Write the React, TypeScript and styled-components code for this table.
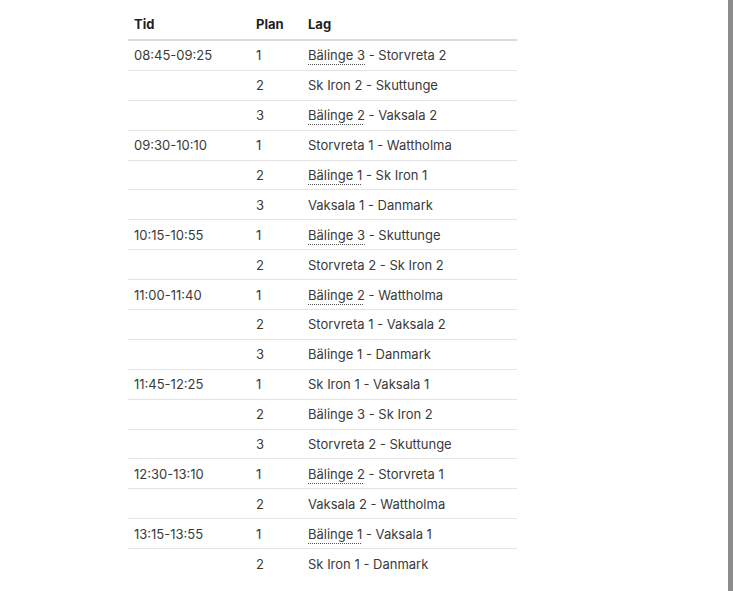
import styled, { createGlobalStyle } from 'styled-components';

const GlobalStyle = createGlobalStyle`
  html, body {
    margin: 0;
    padding: 0;
    background: #fff;
  }
  body {
    font-family: Inter, "Liberation Sans", Arial, sans-serif;
    color: #212529;
  }
`;

const Screen = styled.div`
  display: flex;
  height: 591px;
  overflow: hidden;
`;

const Content = styled.main`
  flex: 1;
  padding: 8px 0 0 128px;
`;

const EdgeBar = styled.div`
  width: 5px;
  background: #8c8c8c;
`;

const Table = styled.table`
  width: 389px;
  border-collapse: collapse;
  font-size: 13px;
  table-layout: fixed;
`;

const HeadCell = styled.th<{ $w: number }>`
  width: ${(p) => p.$w}px;
  box-sizing: border-box;
  text-align: left;
  font-weight: 700;
  color: #1f1f1f;
  padding: 8px 6px 7px;
  border-bottom: 2px solid #dcdcdc;
`;

const Row = styled.tr<{ $first: boolean }>`
  border-top: ${(p) => (p.$first ? 'none' : '1px solid #e4e4e4')};
`;

const Cell = styled.td`
  height: 28.9px;
  padding: 0 6px;
  color: #3a3a3a;
  vertical-align: middle;
  white-space: nowrap;
`;

const Team = styled.abbr`
  text-decoration: underline dotted #555;
  text-underline-offset: 4px;
  text-decoration-thickness: 1px;
  cursor: help;
`;

type Match = { time?: string; plan: number; home: string; away: string; abbr?: boolean };

const matches: Match[] = [
  { time: '08:45-09:25', plan: 1, home: 'Bälinge 3', away: 'Storvreta 2', abbr: true },
  { plan: 2, home: 'Sk Iron 2', away: 'Skuttunge' },
  { plan: 3, home: 'Bälinge 2', away: 'Vaksala 2', abbr: true },
  { time: '09:30-10:10', plan: 1, home: 'Storvreta 1', away: 'Wattholma' },
  { plan: 2, home: 'Bälinge 1', away: 'Sk Iron 1', abbr: true },
  { plan: 3, home: 'Vaksala 1', away: 'Danmark' },
  { time: '10:15-10:55', plan: 1, home: 'Bälinge 3', away: 'Skuttunge', abbr: true },
  { plan: 2, home: 'Storvreta 2', away: 'Sk Iron 2' },
  { time: '11:00-11:40', plan: 1, home: 'Bälinge 2', away: 'Wattholma', abbr: true },
  { plan: 2, home: 'Storvreta 1', away: 'Vaksala 2' },
  { plan: 3, home: 'Bälinge 1', away: 'Danmark' },
  { time: '11:45-12:25', plan: 1, home: 'Sk Iron 1', away: 'Vaksala 1' },
  { plan: 2, home: 'Bälinge 3', away: 'Sk Iron 2' },
  { plan: 3, home: 'Storvreta 2', away: 'Skuttunge' },
  { time: '12:30-13:10', plan: 1, home: 'Bälinge 2', away: 'Storvreta 1', abbr: true },
  { plan: 2, home: 'Vaksala 2', away: 'Wattholma' },
  { time: '13:15-13:55', plan: 1, home: 'Bälinge 1', away: 'Vaksala 1', abbr: true },
  { plan: 2, home: 'Sk Iron 1', away: 'Danmark' },
];

export default function App() {
  return (
    <>
      <GlobalStyle />
      <Screen>
        <Content>
          <Table>
            <thead>
              <tr>
                <HeadCell $w={122}>Tid</HeadCell>
                <HeadCell $w={52}>Plan</HeadCell>
                <HeadCell $w={215}>Lag</HeadCell>
              </tr>
            </thead>
            <tbody>
              {matches.map((m, i) => (
                <Row key={i} $first={i === 0}>
                  <Cell>{m.time ?? ''}</Cell>
                  <Cell>{m.plan}</Cell>
                  <Cell>
                    {m.abbr ? <Team title={m.home}>{m.home}</Team> : m.home} - {m.away}
                  </Cell>
                </Row>
              ))}
            </tbody>
          </Table>
        </Content>
        <EdgeBar />
      </Screen>
    </>
  );
}
